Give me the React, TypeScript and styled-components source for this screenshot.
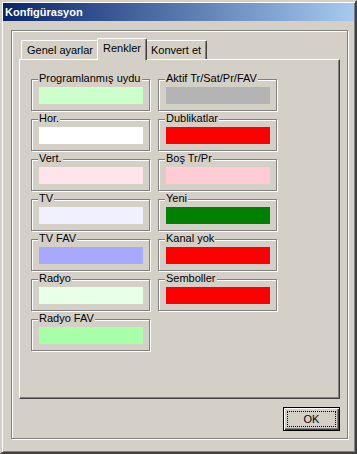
import React from "react";
import styled, { createGlobalStyle } from "styled-components";

const Global = createGlobalStyle`
  html, body { margin: 0; padding: 0; background: #D4D0C8; }
  body { font-family: "Liberation Sans", Arial, sans-serif; font-size: 11px; color: #000; }
  * { box-sizing: border-box; }
`;

const Window = styled.div`
  width: 357px;
  height: 454px;
  display: flex;
  flex-direction: column;
  background: #D4D0C8;
  border: 2px solid;
  border-color: #D4D0C8 #404040 #404040 #D4D0C8;
  box-shadow: inset 1px 1px 0 #fff, inset -1px -1px 0 #808080;
  padding: 1px;
`;

const TitleBar = styled.div`
  height: 18px;
  flex: none;
  display: flex;
  align-items: center;
  padding-left: 2px;
  background: linear-gradient(to right, #0A246A, #A6CAF0);
  color: #fff;
  font-weight: bold;
  font-size: 11px;
`;

const Body = styled.div`
  flex: 1;
  display: flex;
  padding: 9px 6px 12px 8px;
`;

const Frame = styled.div`
  flex: 1;
  display: flex;
  flex-direction: column;
  padding: 7px;
  border: 1px solid #808080;
  box-shadow: inset 1px 1px 0 #fff, 1px 1px 0 #fff;
`;

const TabStrip = styled.div`
  height: 21px;
  display: flex;
  align-items: flex-end;
  padding-left: 2px;
  flex: none;
`;

const Tab = styled.div<{ $w: number; $active?: boolean }>`
  position: relative;
  z-index: ${(p) => (p.$active ? 2 : 1)};
  width: ${(p) => (p.$active ? p.$w + 4 : p.$w)}px;
  height: ${(p) => (p.$active ? 22 : 19)}px;
  margin: 0 ${(p) => (p.$active ? -2 : 0)}px ${(p) => (p.$active ? -1 : 0)}px;
  padding-bottom: ${(p) => (p.$active ? 4 : 1)}px;
  display: flex;
  align-items: center;
  justify-content: center;
  background: #D4D0C8;
  border-top: 1px solid #fff;
  border-left: 1px solid #fff;
  border-right: 1px solid #404040;
  border-top-left-radius: 2px;
  border-top-right-radius: 2px;
  box-shadow: inset -1px 0 0 #808080;
  white-space: nowrap;
`;

const Panel = styled.div`
  height: 340px;
  flex: none;
  border: 1px solid;
  border-color: #fff #404040 #404040 #fff;
  box-shadow: inset -1px -1px 0 #808080;
  padding: 19px 0 0 11px;
  display: grid;
  grid-template-columns: 119px 119px;
  column-gap: 8px;
  align-items: start;
`;

const Column = styled.div`
  display: flex;
  flex-direction: column;
  gap: 8px;
`;

const Group = styled.div`
  position: relative;
  height: 32px;
  border: 1px solid #808080;
  box-shadow: inset 1px 1px 0 #fff, 1px 1px 0 #fff;
  padding: 7px 0 0 7px;
`;

const Legend = styled.span`
  position: absolute;
  top: -8px;
  left: 6px;
  line-height: 13px;
  padding: 0 1px;
  background: #D4D0C8;
  white-space: nowrap;
`;

const Swatch = styled.div<{ $c: string }>`
  width: 104px;
  height: 17px;
  background: ${(p) => p.$c};
`;

const ButtonRow = styled.div`
  margin-top: 8px;
  display: flex;
  justify-content: flex-end;
`;

const Button = styled.div`
  width: 57px;
  height: 24px;
  border: 1px solid #000;
  box-shadow: inset 1px 1px 0 #fff, inset -1px -1px 0 #404040, inset -2px -2px 0 #808080;
  padding: 3px;
  display: flex;
`;

const Focus = styled.span`
  flex: 1;
  border: 1px dotted #000;
  display: flex;
  align-items: center;
  justify-content: center;
`;

type Item = { label: string; color: string };

const left: Item[] = [
  { label: "Programlanmış uydu", color: "#CCFFCC" },
  { label: "Hor.", color: "#FFFFFF" },
  { label: "Vert.", color: "#FFE4EC" },
  { label: "TV", color: "#F0F0FF" },
  { label: "TV FAV", color: "#A8A8FF" },
  { label: "Radyo", color: "#E8FFE8" },
  { label: "Radyo FAV", color: "#A8FFA8" },
];

const right: Item[] = [
  { label: "Aktif Tr/Sat/Pr/FAV", color: "#B4B4B4" },
  { label: "Dublikatlar", color: "#FF0000" },
  { label: "Boş Tr/Pr", color: "#FFCCD4" },
  { label: "Yeni", color: "#008000" },
  { label: "Kanal yok", color: "#FF0000" },
  { label: "Semboller", color: "#FF0000" },
];

const ColorGroup = ({ item }: { item: Item }) => (
  <Group>
    <Legend>{item.label}</Legend>
    <Swatch $c={item.color} />
  </Group>
);

export default function App() {
  return (
    <>
      <Global />
      <Window>
        <TitleBar>Konfigürasyon</TitleBar>
        <Body>
          <Frame>
            <TabStrip>
              <Tab $w={78}>Genel ayarlar</Tab>
              <Tab $w={46} $active>Renkler</Tab>
              <Tab $w={62}>Konvert et</Tab>
            </TabStrip>
            <Panel>
              <Column>
                {left.map((it) => (
                  <ColorGroup key={it.label} item={it} />
                ))}
              </Column>
              <Column>
                {right.map((it) => (
                  <ColorGroup key={it.label} item={it} />
                ))}
              </Column>
            </Panel>
            <ButtonRow>
              <Button>
                <Focus>OK</Focus>
              </Button>
            </ButtonRow>
          </Frame>
        </Body>
      </Window>
    </>
  );
}
